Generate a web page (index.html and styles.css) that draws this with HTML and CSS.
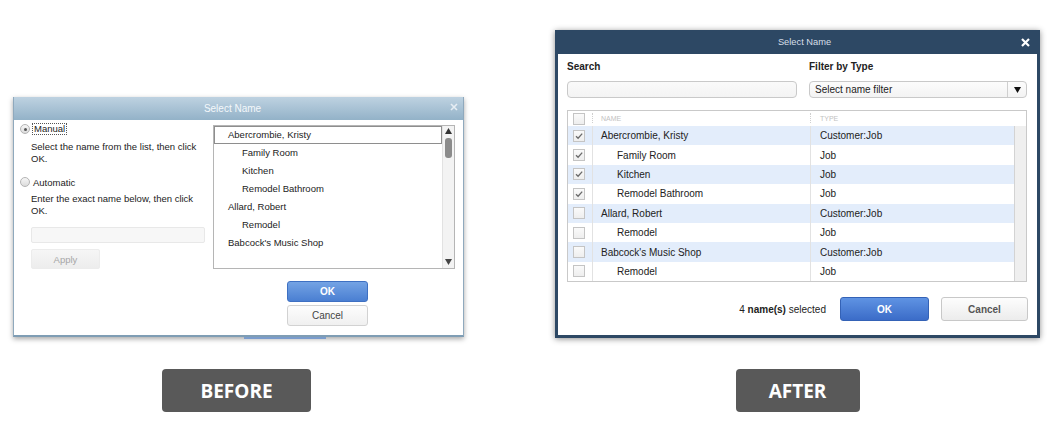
FILE: index.html
```html
<!DOCTYPE html>
<html lang="en">
<head>
<meta charset="utf-8">
<title>Select Name – Before / After</title>
<link rel="stylesheet" href="styles.css">
</head>
<body>
<div class="page">
  <section class="col col-before">
    <div class="old-dialog">
      <div class="old-title">
        <span>Select Name</span>
        <svg class="old-close" width="8" height="8" viewBox="0 0 8 8"><path d="M1 1L7 7M7 1L1 7" stroke="#e6edf3" stroke-width="1.6" fill="none"/></svg>
      </div>
      <div class="old-body">
        <div class="old-left">
          <div class="radio-row first"><span class="radio checked"></span><span class="focus">Manual</span></div>
          <p class="hint">Select the name from the list, then click<br>OK.</p>
          <div class="radio-row second"><span class="radio"></span><span class="plain">Automatic</span></div>
          <p class="hint">Enter the exact name below, then click<br>OK.</p>
          <div class="old-input"></div>
          <div class="old-apply">Apply</div>
        </div>
        <div class="old-right">
          <div class="old-list">
            <div class="old-items">
              <div class="old-item lvl0 sel">Abercrombie, Kristy</div>
              <div class="old-item lvl1">Family Room</div>
              <div class="old-item lvl1">Kitchen</div>
              <div class="old-item lvl1">Remodel Bathroom</div>
              <div class="old-item lvl0">Allard, Robert</div>
              <div class="old-item lvl1">Remodel</div>
              <div class="old-item lvl0">Babcock's Music Shop</div>
            </div>
            <div class="old-scroll">
              <svg class="arrow-up" width="7" height="6" viewBox="0 0 7 6"><path d="M3.5 0L7 6H0Z" fill="#333"/></svg>
              <div class="old-thumb"></div>
              <svg class="arrow-down" width="7" height="6" viewBox="0 0 7 6"><path d="M0 0H7L3.5 6Z" fill="#444"/></svg>
            </div>
          </div>
          <div class="old-buttons">
            <div class="old-btn old-ok">OK</div>
            <div class="old-btn old-cancel">Cancel</div>
          </div>
        </div>
      </div>
    </div>
    <div class="tag tag-before">BEFORE</div>
  </section>

  <section class="col col-after">
    <div class="new-dialog">
      <div class="new-title">
        <span>Select Name</span>
        <svg class="new-close" width="9" height="9" viewBox="0 0 9 9"><path d="M1 1L8 8M8 1L1 8" stroke="#fff" stroke-width="2.2" fill="none"/></svg>
      </div>
      <div class="new-body">
        <div class="filters">
          <div class="field">
            <div class="field-label">Search</div>
            <div class="search-box"></div>
          </div>
          <div class="field">
            <div class="field-label">Filter by Type</div>
            <div class="select-box">
              <span class="select-text">Select name filter</span>
              <span class="select-arrow"><svg width="7" height="6" viewBox="0 0 7 6"><path d="M0 0H7L3.5 6Z" fill="#111"/></svg></span>
            </div>
          </div>
        </div>

        <div class="grid">
          <div class="grid-head">
            <div class="c-check"><span class="cb"></span></div>
            <div class="c-name head-cell">NAME</div>
            <div class="c-type head-cell">TYPE</div>
          </div>
          <div class="grid-main">
            <div class="grid-rows">
              <div class="row alt"><div class="c-check"><span class="cb"><svg width="12" height="12" viewBox="0 0 12 12"><path d="M3 6.2L5.1 8.3L9.2 3.6" stroke="#6b6b6b" stroke-width="1.3" fill="none"/></svg></span></div><div class="c-name">Abercrombie, Kristy</div><div class="c-type">Customer:Job</div></div>
              <div class="row"><div class="c-check"><span class="cb"><svg width="12" height="12" viewBox="0 0 12 12"><path d="M3 6.2L5.1 8.3L9.2 3.6" stroke="#6b6b6b" stroke-width="1.3" fill="none"/></svg></span></div><div class="c-name sub">Family Room</div><div class="c-type">Job</div></div>
              <div class="row alt"><div class="c-check"><span class="cb"><svg width="12" height="12" viewBox="0 0 12 12"><path d="M3 6.2L5.1 8.3L9.2 3.6" stroke="#6b6b6b" stroke-width="1.3" fill="none"/></svg></span></div><div class="c-name sub">Kitchen</div><div class="c-type">Job</div></div>
              <div class="row"><div class="c-check"><span class="cb"><svg width="12" height="12" viewBox="0 0 12 12"><path d="M3 6.2L5.1 8.3L9.2 3.6" stroke="#6b6b6b" stroke-width="1.3" fill="none"/></svg></span></div><div class="c-name sub">Remodel Bathroom</div><div class="c-type">Job</div></div>
              <div class="row alt"><div class="c-check"><span class="cb"></span></div><div class="c-name">Allard, Robert</div><div class="c-type">Customer:Job</div></div>
              <div class="row"><div class="c-check"><span class="cb"></span></div><div class="c-name sub">Remodel</div><div class="c-type">Job</div></div>
              <div class="row alt"><div class="c-check"><span class="cb"></span></div><div class="c-name">Babcock's Music Shop</div><div class="c-type">Customer:Job</div></div>
              <div class="row"><div class="c-check"><span class="cb"></span></div><div class="c-name sub">Remodel</div><div class="c-type">Job</div></div>
            </div>
            <div class="new-scroll"></div>
          </div>
        </div>

        <div class="footer">
          <span class="count">4 <b>name(s)</b> selected</span>
          <div class="new-btn new-ok">OK</div>
          <div class="new-btn new-cancel">Cancel</div>
        </div>
      </div>
    </div>
    <div class="tag tag-after">AFTER</div>
  </section>
</div>
</body>
</html>
```

FILE: styles.css
```css
* { box-sizing: border-box; }
html, body { margin: 0; padding: 0; background: #fff; }
body {
  width: 1054px;
  height: 427px;
  overflow: hidden;
  font-family: "Liberation Sans", Arial, sans-serif;
  color: #222;
}
.page { display: flex; height: 427px; padding-left: 13px; }
.col { display: flex; flex-direction: column; align-items: center; height: 427px; }
.col-before { width: 451px; padding-top: 97px; }
.col-after { width: 485px; margin-left: 91px; padding-top: 30px; }

.tag {
  margin-top: auto;
  margin-bottom: 15px;
  height: 43px;
  background: #595959;
  color: #fff;
  border-radius: 4px;
  font: 700 19px "Open Sans", sans-serif;
  display: flex;
  align-items: center;
  justify-content: center;
}
.tag-before { width: 149px; margin-right: 4px; }
.tag-after { width: 124px; }

/* ---------- OLD DIALOG ---------- */
.old-dialog {
  position: relative;
  width: 451px;
  height: 240px;
  background: #fff;
  border: 1px solid #8fa9bd;
  border-top: none;
  border-bottom: 2px solid #7f9db4;
  box-shadow: 0 2px 5px rgba(0,0,0,.35);
  display: flex;
  flex-direction: column;
  font-size: 9.5px;
}
.old-dialog::after {
  content: "";
  position: absolute;
  left: 230px;
  bottom: -4px;
  width: 82px;
  height: 2px;
  background: #7a9ccc;
}
.old-title {
  position: relative;
  height: 23px;
  flex: none;
  background: linear-gradient(#bed2e1, #93b2c8);
  color: #f4f8fb;
  font-size: 10px;
  display: flex;
  align-items: center;
  justify-content: center;
  padding-right: 12px;
}
.old-close { position: absolute; right: 5px; top: 6px; }
.old-body { display: flex; padding: 0 8px 0 6px; flex: 1; }
.old-left { width: 185px; display: flex; flex-direction: column; }
.radio-row { display: flex; align-items: center; height: 12px; }
.radio-row.first { margin-top: 3px; }
.radio-row.second { margin-top: 11px; }
.radio {
  width: 10px; height: 10px;
  border-radius: 50%;
  border: 1px solid #b4b4b4;
  background: linear-gradient(#f6f6f6, #dcdcdc);
  position: relative;
  flex: none;
}
.radio.checked::after {
  content: "";
  position: absolute;
  left: 2.5px; top: 2.5px;
  width: 3px; height: 3px;
  border-radius: 50%;
  background: #555;
}
.focus { margin-left: 2px; border: 1px dotted #555; padding: 0 1px; line-height: 10px; color: #222; }
.plain { margin-left: 3px; color: #222; }
.hint { margin: 6px 0 0 11px; line-height: 12px; color: #222; }
.radio-row.second + .hint { margin-top: 5px; }
.old-input {
  margin: 10px 0 0 11px;
  width: 174px; height: 16px;
  background: #f7f7f7;
  border: 1px solid #e8e8e8;
  border-radius: 2px;
}
.old-apply {
  margin: 6px 0 0 11px;
  width: 69px; height: 20px;
  background: linear-gradient(#f6f6f6, #ededed);
  border: 1px solid #ececec;
  border-radius: 2px;
  color: #a6a6a6;
  display: flex; align-items: center; justify-content: center;
}
.old-right { margin-left: 8px; display: flex; flex-direction: column; }
.old-list {
  margin-top: 5px;
  width: 242px; height: 144px;
  border: 1px solid #b5b5b5;
  display: flex;
}
.old-items { flex: 1; padding-top: 0; }
.old-item { height: 18px; line-height: 18px; color: #222; white-space: nowrap; }
.old-item.lvl0 { padding-left: 14px; }
.old-item.lvl1 { padding-left: 28px; }
.old-item.sel { border: 1px solid #8e8e8e; line-height: 16px; padding-left: 13px; }
.old-scroll {
  width: 12px;
  background: #f3f3f3;
  border-left: 1px solid #e2e2e2;
  display: flex;
  flex-direction: column;
  align-items: center;
  padding-top: 2px;
}
.old-thumb { margin-top: 4px; width: 7px; height: 20px; border-radius: 3px; background: #8b8b8b; }
.arrow-down { margin-top: auto; margin-bottom: 3px; }
.old-buttons { margin: 12px 0 0 74px; display: flex; flex-direction: column; gap: 3px; }
.old-btn {
  width: 81px; height: 21px;
  border-radius: 3px;
  display: flex; align-items: center; justify-content: center;
  font-size: 10px;
}
.old-ok {
  background: linear-gradient(#74a3e4, #4a7fd2);
  border: 1px solid #3e70c2;
  color: #fff;
  font-weight: 700;
}
.old-cancel {
  background: linear-gradient(#fdfdfd, #f0f0f0);
  border: 1px solid #d2d2d2;
  color: #444;
}

/* ---------- NEW DIALOG ---------- */
.new-dialog {
  width: 485px;
  height: 308px;
  background: #2d4864;
  padding: 0 3px 3px;
  box-shadow: 0 1px 6px rgba(0,0,0,.45);
  display: flex;
  flex-direction: column;
  font-size: 10px;
}
.new-title {
  position: relative;
  height: 24px;
  flex: none;
  display: flex; align-items: center; justify-content: center;
  color: #d6dfe8;
  font-size: 9.3px;
  padding-left: 14px;
}
.new-close { position: absolute; right: 7px; top: 8px; }
.new-body { flex: 1; background: #fff; padding: 6px 10px 0 9px; }
.filters { display: grid; grid-template-columns: 230px 218px; column-gap: 12px; }
.field-label { font-weight: 700; line-height: 13px; color: #222; }
.search-box, .select-box {
  margin-top: 8px;
  height: 17px;
  border: 1px solid #c9c9c9;
  border-radius: 4px;
  background: linear-gradient(#fafafa, #f3f3f3);
}
.select-box { display: flex; align-items: stretch; background: linear-gradient(#fcfcfc, #f3f3f3); }
.select-text { flex: 1; padding-left: 5px; line-height: 15px; color: #222; }
.select-arrow { width: 19px; border-left: 1px solid #cfcfcf; display: flex; align-items: center; justify-content: center; }

.grid { margin-top: 12px; width: 460px; border: 1px solid #c9c9c9; }
.grid-head { display: grid; grid-template-columns: 24px 218px 1fr; height: 15px; align-items: center; }
.head-cell { font-size: 7px; color: #c2c2c2; position: relative; line-height: 15px; }
.head-cell::before {
  content: "";
  position: absolute;
  left: 0; top: 2px;
  height: 10px;
  border-left: 1px dotted #cfcfcf;
}
.c-check { padding-left: 5px; display: flex; align-items: center; }
.cb {
  width: 12px; height: 12px;
  border: 1px solid #c4c4c4;
  background: linear-gradient(#fafafa, #eeeeee);
  display: block;
  position: relative;
}
.cb svg { position: absolute; left: -1px; top: -1px; }
.grid-main { display: flex; }
.grid-rows { flex: 1; }
.row { display: grid; grid-template-columns: 24px 218px 1fr; height: 19.4px; align-items: stretch; background: #fff; }
.row.alt { background: #e3edfb; }
.row .c-name, .row .c-type { border-left: 1px solid #e2e2e2; display: flex; align-items: center; white-space: nowrap; color: #222; }
.c-name { padding-left: 8px; }
.c-name.sub { padding-left: 24px; }
.c-type { padding-left: 9px; }
.head-cell.c-name, .head-cell.c-type { padding-left: 9px; }
.head-cell.c-type { padding-left: 10px; }
.new-scroll { width: 12px; background: #efefef; border-left: 1px solid #d3d3d3; }

.footer { display: flex; justify-content: flex-end; align-items: center; margin-top: 15px; margin-right: -1px; }
.count { margin-right: 14px; color: #222; }
.new-btn {
  height: 24px;
  border-radius: 3px;
  display: flex; align-items: center; justify-content: center;
  font-weight: 700;
}
.new-ok {
  width: 89px;
  background: linear-gradient(#5f93e3, #3b6cc8);
  border: 1px solid #3462b6;
  color: #fff;
}
.new-cancel {
  width: 87px;
  margin-left: 12px;
  background: linear-gradient(#fdfdfd, #ececec);
  border: 1px solid #c8c8c8;
  color: #555;
}
```
